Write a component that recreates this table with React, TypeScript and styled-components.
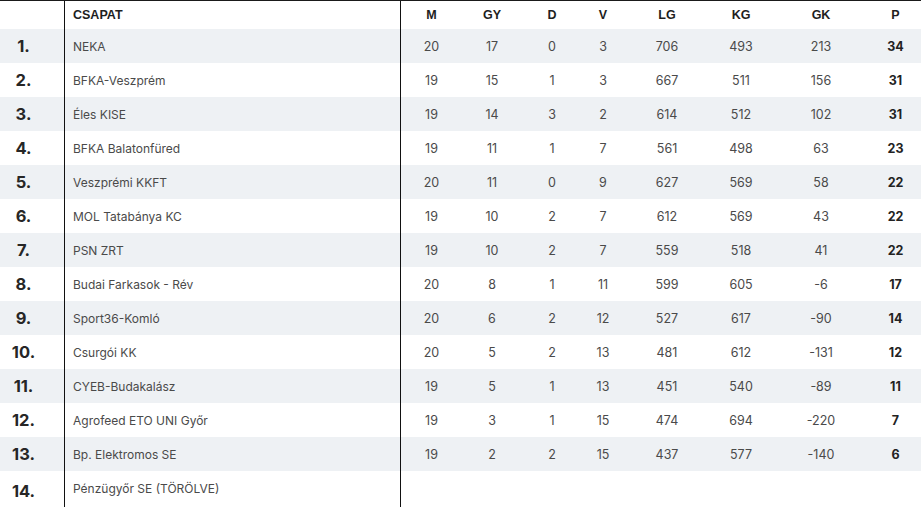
import React from "react";
import styled, { createGlobalStyle } from "styled-components";

const GlobalStyle = createGlobalStyle`
    html, body {
        margin: 0;
        padding: 0;
        background: #fff;
    }
    body {
        font-family: "Inter", "Noto Sans", sans-serif;
        color: #4a4a4a;
    }
`;

// rank | team | M GY D V LG KG GK P
const COLUMNS = "65px 336px 61px 60px 60px 42px 86px 62px 98px 51px";

const Table = styled.div`
    width: 921px;
    min-height: 100vh;
    box-sizing: border-box;
    display: flex;
    flex-direction: column;
    border-top: 1px solid #1a1a1a;
`;

const HeaderRow = styled.div`
    display: grid;
    grid-template-columns: ${COLUMNS};
    height: 28px;
    align-items: stretch;
`;

interface RowProps {
    $striped?: boolean;
}
const Row = styled.div<RowProps>`
    display: grid;
    grid-template-columns: ${COLUMNS};
    height: 34px;
    background: ${props => props.$striped ? "#eef1f4" : "#fff"};
    &:last-child {
        flex-grow: 1;
        align-items: start;
    }
    &:last-child > div {
        height: 34px;
    }
    &:last-child > div:nth-child(-n+2) {
        height: 100%;
        align-items: flex-start;
        padding-top: 10px;
        box-sizing: border-box;
    }
`;

const Cell = styled.div`
    display: flex;
    align-items: center;
    justify-content: center;
    font-size: 12.5px;
    color: #4a4a4a;
`;

const HeadCell = styled(Cell)`
    font-family: "Liberation Sans", Arial, sans-serif;
    font-weight: 700;
    font-size: 12.5px;
    color: #1e1e1e;
`;

const RankCell = styled(Cell)`
    border-right: 1px solid #111;
    padding-right: 17px;
    font-size: 16.5px;
    font-weight: 700;
    color: #262626;
`;

const TeamCell = styled(Cell)`
    justify-content: flex-start;
    padding-left: 8px;
    border-right: 1px solid #111;
    font-size: 12px;
`;

const TeamHead = styled(HeadCell)`
    justify-content: flex-start;
    padding-left: 8px;
    border-right: 1px solid #111;
`;

const EmptyHead = styled.div`
    border-right: 1px solid #111;
`;

const PointsCell = styled(Cell)`
    font-weight: 700;
    color: #222;
`;

type Team = {
    name: string;
    stats?: number[];
};

const teams: Team[] = [
    { name: "NEKA", stats: [20, 17, 0, 3, 706, 493, 213, 34] },
    { name: "BFKA-Veszprém", stats: [19, 15, 1, 3, 667, 511, 156, 31] },
    { name: "Éles KISE", stats: [19, 14, 3, 2, 614, 512, 102, 31] },
    { name: "BFKA Balatonfüred", stats: [19, 11, 1, 7, 561, 498, 63, 23] },
    { name: "Veszprémi KKFT", stats: [20, 11, 0, 9, 627, 569, 58, 22] },
    { name: "MOL Tatabánya KC", stats: [19, 10, 2, 7, 612, 569, 43, 22] },
    { name: "PSN ZRT", stats: [19, 10, 2, 7, 559, 518, 41, 22] },
    { name: "Budai Farkasok - Rév", stats: [20, 8, 1, 11, 599, 605, -6, 17] },
    { name: "Sport36-Komló", stats: [20, 6, 2, 12, 527, 617, -90, 14] },
    { name: "Csurgói KK", stats: [20, 5, 2, 13, 481, 612, -131, 12] },
    { name: "CYEB-Budakalász", stats: [19, 5, 1, 13, 451, 540, -89, 11] },
    { name: "Agrofeed ETO UNI Győr", stats: [19, 3, 1, 15, 474, 694, -220, 7] },
    { name: "Bp. Elektromos SE", stats: [19, 2, 2, 15, 437, 577, -140, 6] },
    { name: "Pénzügyőr SE (TÖRÖLVE)" },
];

const headers = ["M", "GY", "D", "V", "LG", "KG", "GK", "P"];

export default function App() {
    return (
        <>
            <GlobalStyle />
            <Table>
                <HeaderRow>
                    <EmptyHead />
                    <TeamHead>CSAPAT</TeamHead>
                    {headers.map(h => <HeadCell key={h}>{h}</HeadCell>)}
                </HeaderRow>
                {teams.map((team, i) => (
                    <Row key={team.name} $striped={i % 2 === 0}>
                        <RankCell>{i + 1}.</RankCell>
                        <TeamCell>{team.name}</TeamCell>
                        {team.stats && team.stats.map((v, j) =>
                            j === 7
                                ? <PointsCell key={j}>{v}</PointsCell>
                                : <Cell key={j}>{v}</Cell>
                        )}
                    </Row>
                ))}
            </Table>
        </>
    );
}
